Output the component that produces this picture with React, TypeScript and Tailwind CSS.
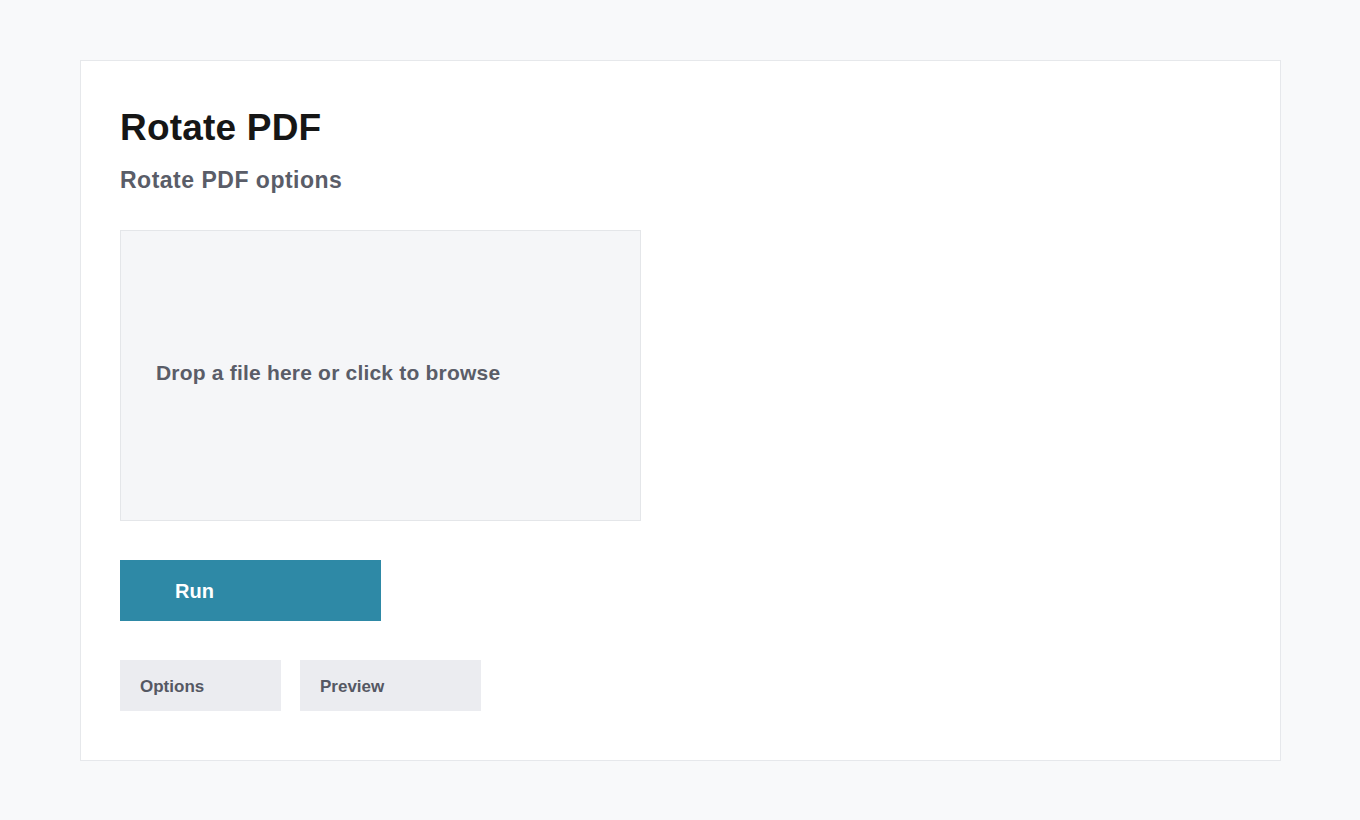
export default function App() {
  return (
    <div className="min-h-screen bg-[#f8f9fa] pt-[60px] pb-[59px] pl-[80px] font-['Liberation_Sans',Arial,sans-serif]">
      <div className="w-[1201px] h-[701px] border border-[#e6e8eb] bg-white px-[39px] pt-[40px]">
        {/* Header */}
        <h1 className="text-[37px] leading-[44px] font-bold tracking-[0.2px] text-[#161616] mt-[5px]">Rotate PDF</h1>
        <h2 className="mt-[17px] text-[23px] leading-[26px] font-bold tracking-[0.5px] text-[#5a5d68]">Rotate PDF options</h2>

        {/* Drop zone */}
        <div className="mt-[37px] w-[521px] h-[291px] border border-[#e4e6e9] bg-[#f5f6f8] flex items-center pl-[35px] pb-[6px] cursor-pointer">
          <span className="text-[21px] font-bold tracking-[0.2px] text-[#5a5d68]">Drop a file here or click to browse</span>
        </div>

        {/* Run */}
        <button className="mt-[39px] w-[261px] h-[61px] bg-[#2e89a6] text-white text-[20px] font-bold text-left pl-[55px]">
          Run
        </button>

        {/* Tabs */}
        <div className="mt-[39px] flex gap-[19px]">
          <button className="w-[161px] h-[51px] bg-[#ebecf0] text-[#555863] text-[17px] font-bold text-left pl-[20px] pt-[2px]">
            Options
          </button>
          <button className="w-[181px] h-[51px] bg-[#ebecf0] text-[#555863] text-[17px] font-bold text-left pl-[20px] pt-[2px]">
            Preview
          </button>
        </div>
      </div>
    </div>
  );
}
